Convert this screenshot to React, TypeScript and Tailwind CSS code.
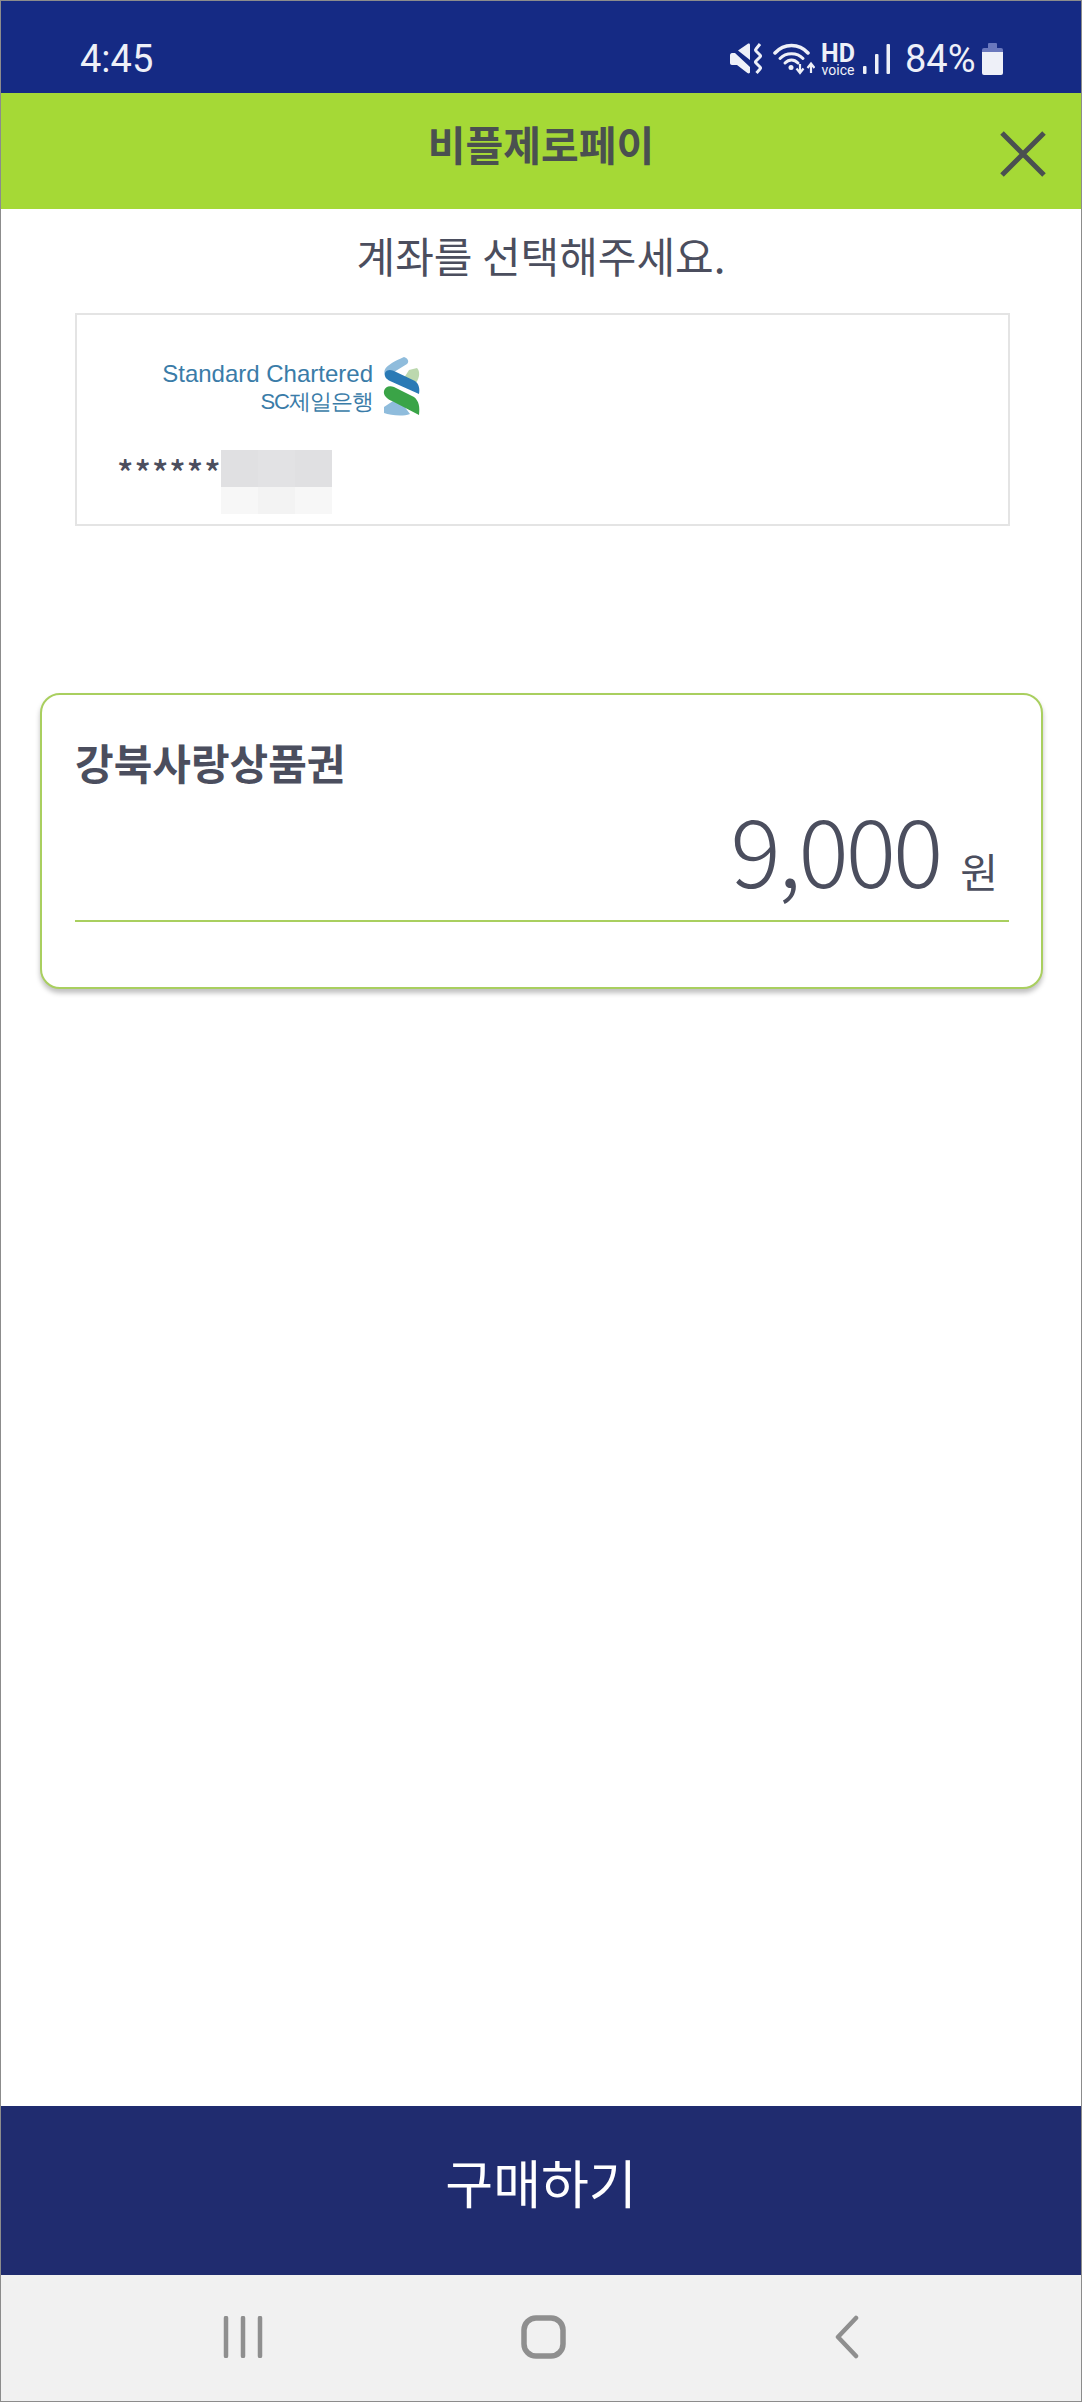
import React from 'react';

const SANS = "font-['Roboto','Noto_Sans_CJK_KR',sans-serif]";
const KR = "font-['Noto_Sans_CJK_KR','Noto_Sans',sans-serif]";

const MuteIcon = () => (
  <svg width="32" height="32" viewBox="0 0 32 32" fill="none">
    <path d="M0 12.500c0-1.500 .8-2.500 2-2.500h3L20 24v5c0 1.500-1.500 1.800-2.600 1L7 22H2c-1.200 0-2-.8-2-2z M8 7.500l9.500-6.500c1.200-.8 2.500-.3 2.500 1v15z" fill="#eef0f8" />
    <path d="M30 1 L26 6 Q25 7 26 8 L30 12 Q31 13 30 14 L26 18 Q25 19 26 20 L30 24 Q31 25 30 26 L26.500 30" stroke="#eef0f8" strokeWidth="3" />
  </svg>
);

const WifiIcon = () => (
  <svg width="42" height="32" viewBox="0 0 42 32" fill="none">
    <path d="M2 10 C11 0 26 0 35 10" stroke="#eef0f8" strokeWidth="3.500" strokeLinecap="round" />
    <path d="M7 15.500 C13 9 24 9 30 15.500" stroke="#eef0f8" strokeWidth="3" strokeLinecap="round" />
    <path d="M12 20 C16 16 21 16 25 20" stroke="#eef0f8" strokeWidth="3" strokeLinecap="round" />
    <circle cx="18" cy="24.500" r="2.500" fill="#eef0f8" />
    <path d="M27 21v8 M23.500 25.500l3.500 4.500 3.500-4.500" stroke="#eef0f8" strokeWidth="2.200" />
    <path d="M38 30v-9 M34.500 25l3.500-4.500 3.500 4.500" stroke="#eef0f8" strokeWidth="2.200" />
  </svg>
);

const SignalIcon = () => (
  <svg width="27" height="30" viewBox="0 0 27 30" fill="#eef0f8">
    <rect x="0" y="22" width="3.500" height="8" rx="1" />
    <rect x="12" y="10" width="3.500" height="20" rx="1" />
    <rect x="23.500" y="0" width="3.500" height="30" rx="1" />
  </svg>
);

const BatteryIcon = () => (
  <div className="flex flex-col items-center w-[21px] h-[32px]">
    <div className="w-[9px] h-[5px] bg-[#6a78bd] rounded-t-[1px]" />
    <div className="w-[21px] h-[4px] bg-[#6a78bd] rounded-t-[2px]" />
    <div className="w-[21px] flex-1 bg-[#eef0f8] rounded-b-[2px]" />
  </div>
);

const ScLogo = () => (
  <svg width="38" height="60" viewBox="0 0 38 60" fill="none">
    <path d="M27 13 L35 11 C38 14 38 20 34 26 L22 21 Z" fill="#bcd8ae" />
    <path d="M2 50 L11 44 L22 49 L28 57 C20 60 8 58 2 56 Z" fill="#8fbcdc" />
    <path d="M22 0 C25 1 28 4 25 7 L12 15 C8 12 5 14 3 18 C1 12 4 8 22 0 Z" fill="#8fbcdc" />
    <path d="M3 16 C4 13 8 12 12 14 L33 24 C37 27 38 32 37 37 L8 24 C4 22 2 19 3 16 Z" fill="#2a7ab5" />
    <path d="M2 34 C3 30 7 28 12 30 L32 40 C37 44 38 50 37 58 L10 44 C5 42 1 38 2 34 Z" fill="#3aa447" />
  </svg>
);

export default function App() {
  return (
    <div className={`flex flex-col w-[1082px] h-[2402px] border border-[#8c8c8c] bg-white ${SANS}`}>
      {/* Status bar */}
      <div className="flex items-center justify-between h-[92px] shrink-0 bg-[#152a84] pl-[79px] pr-[78px] pt-[24px] text-[38px] leading-none text-[#eef0f8]">
        <span>4:45</span>
        <div className="flex items-center">
          <MuteIcon />
          <div className="ml-[11px]">
            <WifiIcon />
          </div>
          <div className="flex flex-col items-center w-[34px] ml-[6px] leading-none">
            <span className="text-[25px] leading-[21px] font-bold">HD</span>
            <span className="text-[14px] leading-[12px]">voice</span>
          </div>
          <div className="ml-[8px]">
            <SignalIcon />
          </div>
          <span className="ml-[15px] mr-[7px] w-[70px]">84%</span>
          <BatteryIcon />
        </div>
      </div>

      {/* Title bar */}
      <div className="relative flex items-center justify-center h-[116px] shrink-0 bg-[#a5d936] pb-[16px]">
        <span className={`${KR} text-[41px] font-bold text-[#4a5050] leading-none`}>비플제로페이</span>
        <button className="absolute right-[35px] top-[38px]">
          <svg width="46" height="46" viewBox="0 0 46 46" fill="none">
            <path d="M2 2 L44 44 M44 2 L2 44" stroke="#4a5050" strokeWidth="5" />
          </svg>
        </button>
      </div>

      {/* Content */}
      <div className="flex-1 flex flex-col">
        <p className={`${KR} text-[42px] leading-[54px] text-center text-[#4b4e5e] mt-[19px]`}>계좌를 선택해주세요.</p>

        <div className="ml-[74px] mr-[71px] mt-[31px] h-[213px] border-2 border-[#e4e4e4] flex flex-col">
          <div className="flex justify-end items-center w-[343px] mt-[42px]">
            <div className="flex flex-col items-end text-[#3a7ca8] font-['Liberation_Sans',sans-serif] leading-none">
              <span className="text-[24px] leading-[29px]">Standard Chartered</span>
              <span className="text-[22px] leading-[27px] tracking-[-1px]">SC제일은행</span>
            </div>
            <div className="ml-[9px]">
              <ScLogo />
            </div>
          </div>
          <div className="flex ml-[40px] mt-[33px]">
            <span className={`${KR} text-[34px] font-medium w-[104px] pt-[3px] leading-[37px] text-[#4b4e5e] tracking-[1px]`}>******</span>
            <div className="grid grid-cols-3 grid-rows-[37px_27px] w-[111px]">
              <div className="bg-[#e0e0e2]" />
              <div className="bg-[#e2e2e4]" />
              <div className="bg-[#e0e0e2]" />
              <div className="bg-[#f7f7f7]" />
              <div className="bg-[#f3f3f3]" />
              <div className="bg-[#f7f7f7]" />
            </div>
          </div>
        </div>

        <div className="ml-[39px] mr-[38px] mt-[167px] h-[296px] rounded-[20px] border-2 border-[#a9cf5f] shadow-[0_4px_5px_rgba(0,0,0,0.25)] bg-white pl-[33px] pr-[32px] flex flex-col">
          <p className={`${KR} text-[42px] font-bold leading-[50px] text-[#4b4e5e] mt-[42px]`}>강북사랑상품권</p>
          <div className="flex items-baseline justify-end h-[135px] border-b-2 border-[#a9cf5f] pr-[11px]">
            <span className={`${KR} text-[94px] font-light leading-[120px] tracking-[-3px] text-[#4b4e5e]`}>9,000</span>
            <span className={`${KR} text-[41px] font-normal ml-[20px] text-[#4b4e5e]`}>원</span>
          </div>
        </div>
      </div>

      {/* Purchase button */}
      <button className={`${KR} h-[169px] shrink-0 bg-[#202c6f] text-white text-[52px] font-normal leading-none pb-[18px]`}>구매하기</button>

      {/* Android nav bar */}
      <div className="flex items-center justify-between h-[126px] shrink-0 bg-[#f1f1f1] pl-[222px] pr-[221px] pb-[2px]">
        <svg width="40" height="42" viewBox="0 0 40 42" fill="none">
          <path d="M3 2v38 M20 2v38 M37 2v38" stroke="#8f8f8f" strokeWidth="4.500" strokeLinecap="round" />
        </svg>
        <svg className="mr-[9px]" width="46" height="44" viewBox="0 0 46 44" fill="none">
          <rect x="3" y="3" width="39" height="38" rx="12" stroke="#8f8f8f" strokeWidth="5.500" />
        </svg>
        <svg width="26" height="44" viewBox="0 0 26 44" fill="none">
          <path d="M22 3 L4 22 L22 41" stroke="#8f8f8f" strokeWidth="4.500" strokeLinecap="round" strokeLinejoin="round" />
        </svg>
      </div>
    </div>
  );
}
